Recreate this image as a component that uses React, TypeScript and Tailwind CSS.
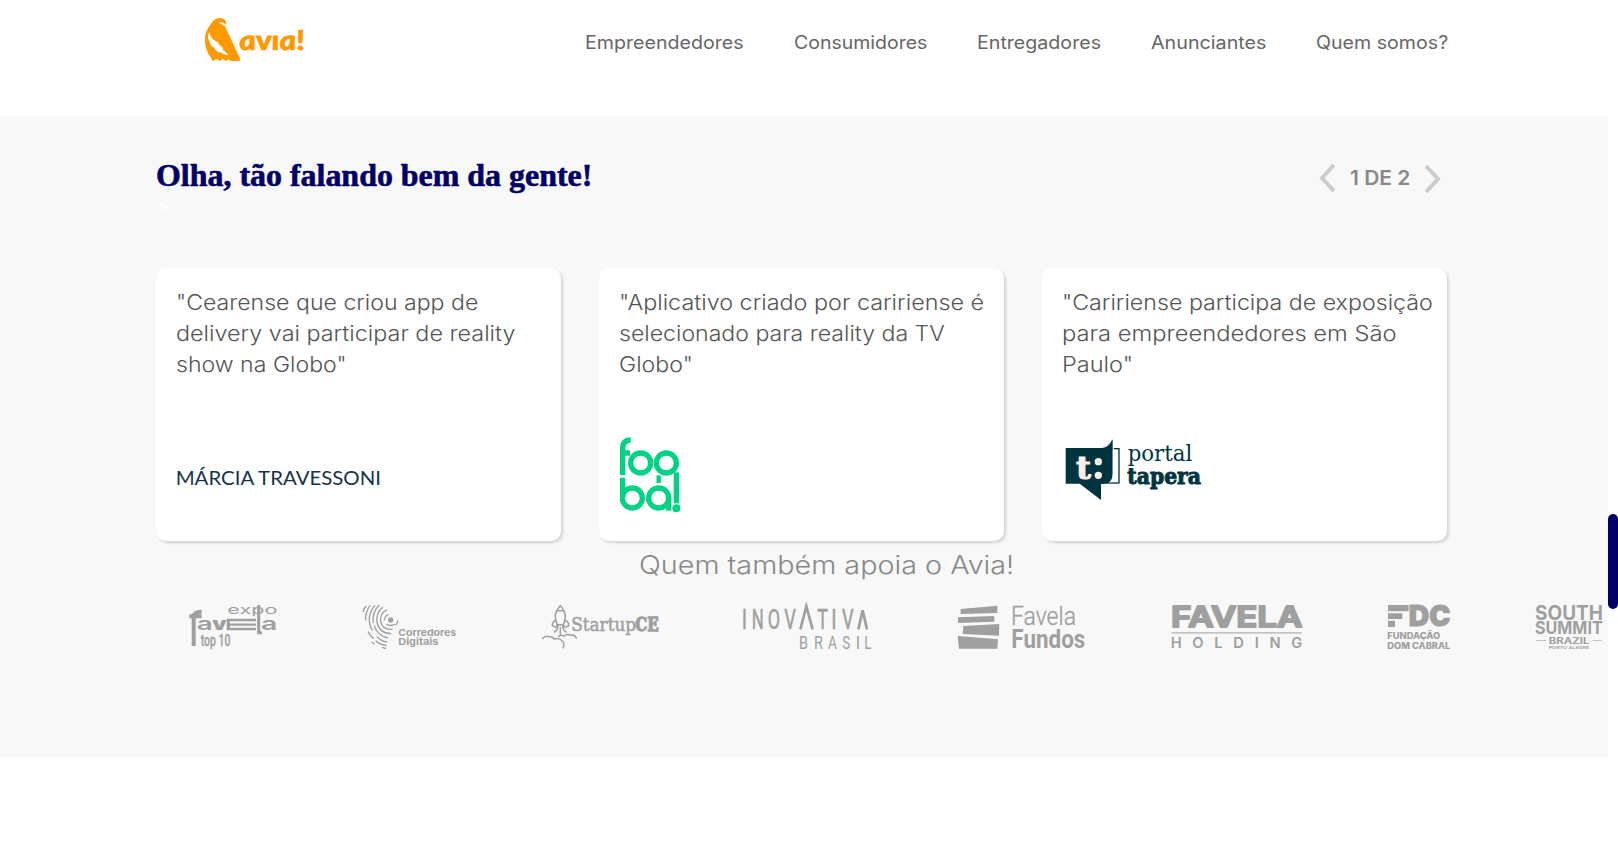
type TProps = {
  x: number;
  y: number;
  w: number;
  size: number;
  weight?: number;
  family?: string;
  fill?: string;
  italic?: boolean;
  stroke?: number;
  adjust?: "spacing" | "spacingAndGlyphs";
  children: string;
};

function T({ x, y, w, size, weight = 400, family = "Inter", fill = "currentColor", italic, stroke = 0, adjust = "spacingAndGlyphs", children }: TProps) {
  return (
    <text
      x={x}
      y={y}
      textLength={w}
      lengthAdjust={adjust}
      fontSize={size}
      fontWeight={weight}
      fontFamily={`${family}, sans-serif`}
      fontStyle={italic ? "italic" : "normal"}
      fill={fill}
      stroke={stroke ? fill : "none"}
      strokeWidth={stroke}
      strokeLinejoin="round"
    >
      {children}
    </text>
  );
}

function AviaLogo() {
  return (
    <svg className="h-[46px] w-[106px] overflow-visible text-[#ff9900]" viewBox="42 36 318 138" fill="currentColor">
      <path d="M66 52C72 41 88 36 99 41C105 43 109 48 109 54L105 58C106 66 108 72 113 81L150 160C152 165 149 168 145 168H122L116 163L107 168L99 161L90 168L80 162L68 168L62 157C52 143 45 126 45 104C45 80 54 70 66 52Z" />
      <path d="M59 80C58 96 70 105 87 113L84 117C92 121 97 126 100 132L96 133C104 138 110 143 115 151C103 148 96 145 89 140L88 143C79 138 74 133 70 125L66 126C61 118 58 111 57 103L54 103C53 94 55 86 59 80Z" fill="#fff" />
      <path d="M86 54C93 50 98 53 105 57L103 66C99 58 93 56 86 54Z" fill="#fff" />
      <g transform="translate(151 134) skewX(7)">
        <T x={0} y={0} w={196} size={82} weight={900} family="Lato" italic stroke={2}>avıa!</T>
      </g>
    </svg>
  );
}

function FoobaLogo() {
  return (
    <svg className="ml-px h-[76px] w-[61px] text-[#00d384]" viewBox="90 530 183 228" fill="none" stroke="currentColor" strokeWidth="16">
      <path d="M98 645V566Q98 539 122 539M90 578H120" />
      <circle cx="152" cy="608" r="30" />
      <circle cx="229" cy="608" r="30" />
      <path d="M98 652V713" />
      <circle cx="127" cy="713" r="30" />
      <circle cx="206" cy="713" r="30" />
      <path d="M236 713V751" />
      <path d="M206 645V668" strokeWidth="13" />
      <path d="M259 636V729" />
      <circle cx="259" cy="744" r="12" fill="currentColor" stroke="none" />
    </svg>
  );
}

function TaperaLogo() {
  return (
    <svg className="ml-[3px] h-[62px] w-[137px] overflow-visible text-[#003540]" viewBox="106 536 411 186" fill="currentColor">
      <rect x="160" y="565" width="108" height="103" fill="none" stroke="currentColor" strokeWidth="4" />
      <path d="M108 563H215C232 561 241 552 247 538H249V640C249 658 240 670 222 670H214V719L150 670H108Z" />
      <path d="M251 563V640C251 652 248 660 243 666" fill="none" stroke="#fff" strokeWidth="3" />
      <T x={139} y={655} w={45} size={96} weight={700} family="'DejaVu Serif'" fill="#fdeeea" stroke={3}>t</T>
      <circle cx="206" cy="604" r="11" fill="#fdeeea" />
      <circle cx="206" cy="645" r="11" fill="#fdeeea" />
      <T x={294} y={603} w={194} size={66} family="'DejaVu Serif'">portal</T>
      <T x={293} y={670} w={221} size={66} weight={700} family="'DejaVu Serif'" stroke={3}>tapera</T>
    </svg>
  );
}

function MarciaLogo() {
  return (
    <svg className="h-5 w-[206px] overflow-visible text-[#17334a]" viewBox="108 624 618 60" fill="currentColor">
      <T x={107} y={674} w={616} size={56} family="Lato">MÁRCIA TRAVESSONI</T>
    </svg>
  );
}

function ExpoFavela() {
  return (
    <svg className="h-11 w-[88px] shrink-0 overflow-visible" viewBox="57 30 264 132" fill="currentColor">
      <path d="M71 153V66Q71 50 95 50M58 64H95" fill="none" stroke="currentColor" strokeWidth="12" />
      <T x={172} y={57} w={150} size={34}>expo</T>
      <T x={80} y={104} w={48} size={52} weight={600}>a</T>
      <T x={127} y={104} w={43} size={52} weight={900}>v</T>
      <path d="M170 75H258M170 89H258M170 102H258" stroke="currentColor" strokeWidth="7" />
      <path d="M175 72V105M266 30V113H276" stroke="currentColor" strokeWidth="9" fill="none" />
      <T x={273} y={104} w={49} size={52} weight={600}>a</T>
      <T x={92} y={152} w={89} size={50} weight={500} family="Roboto" stroke={1}>top 10</T>
    </svg>
  );
}

function Corredores() {
  return (
    <svg className="h-11 w-[93px] shrink-0 overflow-visible" viewBox="579 30 279 132" fill="currentColor">
      <circle cx="662" cy="75" r="8" />
      <g fill="none" stroke="currentColor" strokeWidth="4">
        <path d="M649 87Q662 96 675 87M684 76Q682 84 677 91M655 58Q644 64 643 76" />
        <path d="M651 44Q629 55 632 79Q637 106 668 103" />
        <path d="M639 36Q617 53 621 82Q629 116 664 116" />
        <path d="M628 31Q605 51 610 84" />
        <path d="M613 92Q621 121 654 129" />
        <path d="M615 31Q596 51 598 80Q600 98 608 106" />
        <path d="M601 31Q585 50 587 76M588 33Q580 42 580 51" />
        <path d="M594 110Q600 122 611 131M620 124Q632 138 652 141M617 137Q630 150 650 151M604 141L614 147M636 157L648 161" />
      </g>
      <T x={685} y={122} w={173} size={28} weight={700}>Corredores</T>
      <T x={685} y={151} w={120} size={28} weight={700}>Digitais</T>
    </svg>
  );
}

function StartupCE() {
  return (
    <svg className="h-11 w-[116px] shrink-0 overflow-visible" viewBox="33 30 348 132" fill="currentColor">
      <g fill="none" stroke="currentColor" strokeWidth="4.5">
        <path d="M88 32Q73 48 73 64Q73 77 79 89H97Q103 77 103 64Q103 48 88 32Z" />
        <path d="M77 47H99M75 76Q63 80 64 92L75 97L79 89M101 76Q114 80 113 92L102 97L97 89" />
        <path d="M81 91Q80 108 69 111M95 91Q96 108 107 112M88 97V122" />
        <path d="M33 132Q43 121 55 125Q66 125 69 132Q84 127 94 138Q103 148 95 160M82 126Q88 117 99 123Q108 115 119 121Q130 116 137 131" />
      </g>
      <T x={121} y={109} w={194} size={55} family="'DejaVu Serif'" stroke={1.5}>Startup</T>
      <T x={313} y={109} w={70} size={55} weight={700} family="'DejaVu Serif'" stroke={4}>CE</T>
    </svg>
  );
}

function Inovativa() {
  return (
    <svg className="h-11 w-32 shrink-0 overflow-visible" viewBox="639 30 384 132" fill="currentColor">
      <g fill="none" stroke="currentColor" strokeWidth="8">
        <path d="M811 103L829 34L848 103M985 103L998 46L1011 103" />
      </g>
      <T x={635} y={103} w={16} size={83} family="Roboto" stroke={1.5}>I</T>
      <T x={665} y={103} w={36} size={83} family="Roboto" stroke={1.5}>N</T>
      <T x={713} y={103} w={37} size={83} family="Roboto" stroke={1.5}>O</T>
      <T x={763} y={103} w={35} size={83} family="Roboto" stroke={1.5}>V</T>
      <T x={862} y={103} w={32} size={83} family="Roboto" stroke={1.5}>T</T>
      <T x={904} y={103} w={16} size={83} family="Roboto" stroke={1.5}>I</T>
      <T x={936} y={103} w={35} size={83} family="Roboto" stroke={1.5}>V</T>
      <T x={807} y={161} w={27} size={53} family="Roboto">B</T>
      <T x={852} y={161} w={27} size={53} family="Roboto">R</T>
      <T x={894} y={161} w={27} size={53} family="Roboto">A</T>
      <T x={937} y={161} w={24} size={53} family="Roboto">S</T>
      <T x={977} y={161} w={13} size={53} family="Roboto">I</T>
      <T x={1003} y={161} w={22} size={53} family="Roboto">L</T>
    </svg>
  );
}

function FavelaFundos() {
  return (
    <svg className="h-11 w-32 shrink-0 overflow-visible" viewBox="51 30 384 132" fill="currentColor">
      <path d="M62 42L172 32V54L62 57ZM54 67L163 63V80L54 84ZM70 93L178 87L177 122L68 117ZM53 123L174 133L172 161H57Z" />
      <T x={213} y={89} w={195} size={78} weight={300} family="Roboto" stroke={1}>Favela</T>
      <T x={214} y={159} w={222} size={76} weight={700} family="Roboto">Fundos</T>
    </svg>
  );
}

function FavelaHolding() {
  return (
    <svg className="h-11 w-[131px] shrink-0 overflow-visible" viewBox="693 30 393 132" fill="currentColor">
      <T x={693} y={97} w={394} size={86} weight={600} stroke={6}>FAVELA</T>
      <rect x="694" y="111" width="392" height="5" opacity="0.6" />
      <T x={692} y={160} w={395} size={44} weight={600} adjust="spacing">HOLDING</T>
    </svg>
  );
}

function FundacaoDomCabral() {
  return (
    <svg className="h-11 w-[62px] shrink-0 overflow-visible" viewBox="54 315 186 132" fill="currentColor">
      <path d="M54 315H116V334H54ZM54 340H97V357H54ZM54 362H75V381H54Z" />
      <T x={116} y={379} w={125} size={86} weight={900} stroke={3}>DC</T>
      <T x={52} y={416} w={159} size={27} weight={800}>FUNDAÇÃO</T>
      <T x={52} y={446} w={189} size={25} weight={800}>DOM CABRAL</T>
    </svg>
  );
}

function SouthSummit() {
  return (
    <svg className="h-11 w-[66px] shrink-0 overflow-visible" viewBox="498 315 198 132" fill="currentColor">
      <T x={495} y={359} w={204} size={59} weight={700}>SOUTH</T>
      <T x={495} y={403} w={203} size={52} weight={700}>SUMMIT</T>
      <path d="M498 420H528V423H498ZM668 420H696V423H668Z" opacity="0.6" />
      <T x={536} y={432} w={122} size={26} weight={700}>BRAZIL</T>
      <T x={536} y={446} w={122} size={12} weight={600}>PORTO ALEGRE</T>
    </svg>
  );
}

const line = "block w-max origin-left whitespace-nowrap";
const card = "flex h-[273px] w-[405px] flex-col rounded-[10px] bg-white pl-5 pt-[19px] shadow-[2px_2px_3px_rgba(0,0,0,0.15)]";

export default function App() {
  return (
    <div className="flex h-[850px] w-full flex-col overflow-hidden bg-white font-['Inter',sans-serif]">
      <header className="flex h-[116px] shrink-0 items-start justify-between pt-[17px] pr-[170px] pl-[204px] text-[#666]">
        <AviaLogo />
        <nav className="flex gap-[50px] pt-3 text-[18px] leading-7 whitespace-nowrap">
          <a className="w-[159px]"><span className="block w-max origin-left scale-x-[1.09]">Empreendedores</span></a>
          <a className="w-[133px]"><span className="block w-max origin-left scale-x-[1.083]">Consumidores</span></a>
          <a className="w-[124px]"><span className="block w-max origin-left scale-x-[1.09]">Entregadores</span></a>
          <a className="w-[115px]"><span className="block w-max origin-left scale-x-[1.095]">Anunciantes</span></a>
          <a className="w-[132px]"><span className="block w-max origin-left scale-x-[1.09]">Quem somos?</span></a>
        </nav>
      </header>
      <div className="flex h-[641px] shrink-0">
        <main className="h-full w-[1608px] overflow-hidden bg-[#f8f8f8]">
          <div className="flex h-[152px] justify-between pt-10 pr-[167px] pl-[156px]">
            <div>
              <h2 className="h-10 w-max origin-left scale-x-[1.03] font-['Liberation_Serif',serif] text-[31px] leading-[39px] font-bold text-[#000066] [-webkit-text-stroke:0.6px_#000066]">Olha, tão falando bem da gente!</h2>
              <div className="text-[19px] leading-[22px] text-white">&gt;</div>
            </div>
            <div className="flex h-[43px] items-center gap-[15px] text-[20px] font-semibold text-[#888]">
              <svg className="h-7 w-4" viewBox="0 0 16 28" fill="none" stroke="#ccc" strokeWidth="4"><path d="M15 1L3 14L15 27" /></svg>
              <span className="w-[60px]"><span className="block w-max origin-left scale-x-[1.05] whitespace-nowrap">1 DE 2</span></span>
              <svg className="mt-0.5 h-7 w-4" viewBox="0 0 16 28" fill="none" stroke="#ccc" strokeWidth="4"><path d="M1 1L13 14L1 27" /></svg>
            </div>
          </div>
          <div className="flex gap-[38px] pl-[156px] text-[21px] leading-[31px] font-light text-[#555]">
            <article className={card}>
              <p className="h-[181px]">
                <span className={`${line} scale-x-[1.1]`}>"Cearense que criou app de</span>
                <span className={`${line} scale-x-[1.112]`}>delivery vai participar de reality</span>
                <span className={`${line} scale-x-[1.1]`}>show na Globo"</span>
              </p>
              <MarciaLogo />
            </article>
            <article className={card}>
              <p className="h-[150px]">
                <span className={`${line} scale-x-[1.112]`}>"Aplicativo criado por caririense é</span>
                <span className={`${line} scale-x-[1.1]`}>selecionado para reality da TV</span>
                <span className={`${line} scale-x-[1.1]`}>Globo"</span>
              </p>
              <FoobaLogo />
            </article>
            <article className={card}>
              <p className="h-[152px]">
                <span className={`${line} scale-x-[1.105]`}>"Caririense participa de exposição</span>
                <span className={`${line} scale-x-[1.13]`}>para empreendedores em São</span>
                <span className={`${line} scale-x-[1.12]`}>Paulo"</span>
              </p>
              <TaperaLogo />
            </article>
          </div>
          <h3 className="h-16 pt-[6px] pl-[639px] text-[25px] leading-9 font-light text-[#888]">
            <span className={`${line} scale-x-[1.15]`}>Quem também apoia o Avia!</span>
          </h3>
          <div className="flex gap-[85.8px] pl-[189px] text-[#9f9f9f]">
            <ExpoFavela />
            <Corredores />
            <StartupCE />
            <Inovativa />
            <FavelaFundos />
            <FavelaHolding />
            <FundacaoDomCabral />
            <SouthSummit />
          </div>
        </main>
        <div className="flex flex-1 pt-[398px]">
          <div className="h-[95px] w-[10px] rounded-[5px] bg-[#000066]" />
        </div>
      </div>
    </div>
  );
}
